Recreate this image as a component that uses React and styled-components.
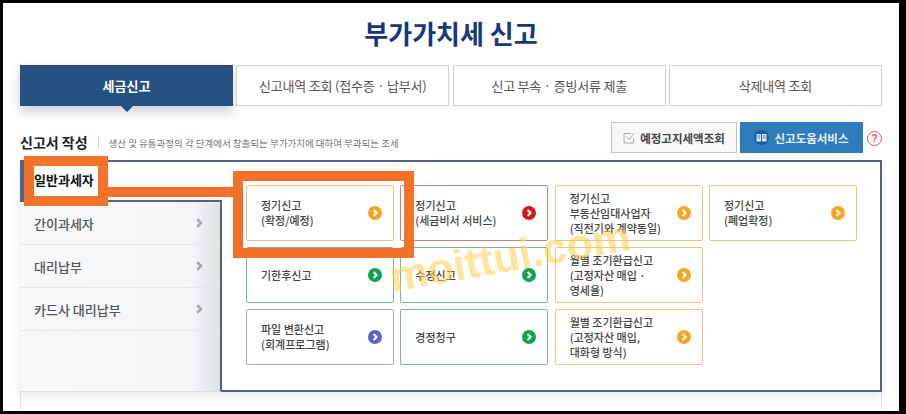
import React from 'react';
import styled, { createGlobalStyle } from 'styled-components';

const GlobalStyle = createGlobalStyle`
  html, body {
    margin: 0;
    background: #000;
  }
  * {
    box-sizing: border-box;
  }
`;

const line = '#56627e';
const orange = '#f3722a';

const Frame = styled.div`
  width: 896px;
  height: 408px;
  margin: 3px 0 0 3px;
  padding: 0 17px;
  background: #fff;
  overflow: hidden;
  font-family: "Noto Sans CJK KR", "Noto Sans", sans-serif;
  color: #333;
`;

const Title = styled.h1`
  height: 62px;
  margin: 0;
  padding-top: 10px;
  font-size: 26px;
  line-height: 40px;
  font-weight: 700;
  text-align: center;
  color: #17387a;
`;

const Tabs = styled.div`
  display: grid;
  grid-template-columns: repeat(4, 213px);
  column-gap: 3.33px;
  height: 41px;
`;

const Tab = styled.div`
  position: relative;
  display: flex;
  align-items: center;
  justify-content: center;
  font-size: 13px;
  font-weight: ${props => (props.$active ? 700 : 400)};
  letter-spacing: ${props => (props.$active ? 0 : '-0.2px')};
  color: ${props => (props.$active ? '#fff' : '#555')};
  background: ${props => (props.$active ? '#26507f' : '#fff')};
  border: 1px solid ${props => (props.$active ? '#26507f' : '#cfcfcf')};
  box-shadow: ${props => (props.$active ? '0 6px 10px rgba(40, 50, 70, .22)' : 'none')};

  ${props => props.$active && `
    &::after {
      content: '';
      position: absolute;
      left: 50%;
      bottom: -7px;
      margin-left: -6px;
      border-left: 6px solid transparent;
      border-right: 6px solid transparent;
      border-top: 6px solid #26507f;
    }
  `}
`;

const SectionRow = styled.div`
  display: flex;
  align-items: flex-end;
  height: 54px;
  padding: 16px 0 7px;
`;

const SectionTitle = styled.strong`
  font-size: 14px;
  line-height: 22px;
  font-weight: 700;
  color: #222;
`;

const SectionNote = styled.span`
  flex: 1;
  margin-left: 10px;
  padding-left: 11px;
  font-size: 9.5px;
  line-height: 20px;
  color: #777;
  position: relative;

  &::before {
    content: '';
    position: absolute;
    left: 0;
    top: 5px;
    height: 11px;
    border-left: 1px solid #ccc;
  }
`;

const ToolButton = styled.div`
  display: flex;
  align-items: center;
  justify-content: center;
  gap: 5px;
  height: 31px;
  width: ${props => props.$width}px;
  margin-right: 3px;
  font-size: 11.5px;
  font-weight: 700;
  color: ${props => (props.$primary ? '#e8f0f8' : '#444')};
  background: ${props => (props.$primary ? '#2f7cbd' : '#f8f8f8')};
  border: 1px solid ${props => (props.$primary ? '#2f7cbd' : '#c4c4c4')};
`;

const BookBadge = styled.span`
  display: flex;
  align-items: center;
  justify-content: center;
  width: 15px;
  height: 15px;
  border-radius: 50%;
  background: #1d5c98;
`;

const HelpMark = styled.span`
  display: flex;
  align-items: center;
  justify-content: center;
  width: 15px;
  height: 15px;
  margin: 0 0 7px 1px;
  border: 1.5px solid #d9534f;
  border-radius: 50%;
  font-family: "Liberation Sans", sans-serif;
  font-size: 10px;
  font-weight: 700;
  color: #d9534f;
`;

const Panel = styled.div`
  position: relative;
  display: flex;
  height: 232px;
  box-shadow: 0 5px 8px rgba(60, 70, 90, .12);
`;

const Sidebar = styled.div`
  display: flex;
  flex-direction: column;
  width: 202px;
`;

const ActiveItem = styled.div`
  height: 42px;
  padding: 6px 0 0 10px;
  border-top: 2px solid ${line};
  border-left: 4px solid ${line};
  border-bottom: 2px solid ${line};
  background: #fff;
  font-size: 13px;
  line-height: 24px;
  font-weight: 700;
  color: #111;
  position: relative;
  z-index: 3;
`;

const SideList = styled.div`
  flex: 1;
  border-right: 2px solid ${line};
  border-bottom: 1px solid #dcdde0;
  background: linear-gradient(to right, #f7f8fa 0, #f5f6f8 85%, #dfe1e6 100%);
`;

const SideItem = styled.div`
  display: flex;
  align-items: center;
  justify-content: space-between;
  height: 43px;
  padding: 0 16px 0 14px;
  border-bottom: 1px solid #e6e7ea;
  font-size: 13px;
  font-weight: 500;
  color: #555;
`;

const Content = styled.div`
  flex: 1;
  padding: 23px 0 0 24px;
  border-top: 2px solid ${line};
  border-right: 2px solid ${line};
  border-bottom: 2px solid ${line};
  background: #fff;
`;

const Cards = styled.div`
  display: grid;
  grid-template-columns: repeat(4, 148px);
  grid-auto-rows: 56px;
  gap: 6px 6.33px;
`;

const tones = {
  yellow: { border: '#dfc883', dot: '#f5a623' },
  red: { border: '#cf7c84', dot: '#d7161f' },
  green: { border: '#73b9a0', dot: '#13a24f' },
  purple: { border: '#a6a9c4', dot: '#5f64c8' }
};

const Card = styled.div`
  display: flex;
  align-items: center;
  justify-content: space-between;
  padding: 0 11px 0 14px;
  border: 1px solid ${props => tones[props.$tone].border};
  border-radius: 2px;
  background: #fff;
  font-size: 11px;
  line-height: 15px;
  font-weight: 500;
  color: #444;
`;

const Dot = styled.span`
  flex: none;
  display: flex;
  align-items: center;
  justify-content: center;
  width: 14px;
  height: 14px;
  border-radius: 50%;
  background: ${props => tones[props.$tone].dot};
`;

const Below = styled.div`
  height: 30px;
  border-left: 1px solid #e4e4e4;
  border-right: 1px solid #e4e4e4;
`;

const Highlight = styled.div`
  position: absolute;
  left: ${props => props.$x}px;
  top: ${props => props.$y}px;
  width: ${props => props.$w}px;
  height: ${props => props.$h}px;
  border: 10px solid ${orange};
  z-index: 4;
`;

const Connector = styled.div`
  position: absolute;
  left: 88px;
  top: 27px;
  width: 125px;
  height: 10px;
  background: ${orange};
  z-index: 4;
`;

const Watermark = styled.div`
  position: absolute;
  left: 368px;
  top: 71px;
  font-family: "Liberation Sans", sans-serif;
  font-size: 43px;
  line-height: 50px;
  font-weight: 700;
  color: rgba(255, 205, 70, .55);
  transform: rotate(-10deg);
  z-index: 5;
  white-space: nowrap;
`;

const Chevron = ({ size = 8, color = '#fff', width = 2 }) => (
  <svg width={size} height={size} viewBox="0 0 8 8" fill="none">
    <path d="M2.6 1 L5.6 4 L2.6 7" stroke={color} strokeWidth={width} />
  </svg>
);

const CheckBox = () => (
  <svg width="12" height="12" viewBox="0 0 12 12" fill="none" stroke="#aaa" strokeWidth="1">
    <path d="M10.5 6.5 V11 H1 V1.5 H8" />
    <path d="M3.5 4.5 L6 7.5 L11 1" />
  </svg>
);

const Book = () => (
  <svg width="11" height="9" viewBox="0 0 11 9">
    <path d="M0.5 1 H5 V8.5 H0.5 Z M6 1 H10.5 V8.5 H6 Z" fill="#dbe8f5" />
    <path d="M1.5 3 H4 M1.5 5 H4 M7 3 H9.5 M7 5 H9.5" stroke="#1d5c98" strokeWidth="0.8" />
  </svg>
);

const sideItems = ['간이과세자', '대리납부', '카드사 대리납부'];

const cards = [
  { tone: 'yellow', lines: ['정기신고', '(확정/예정)'] },
  { tone: 'red', lines: ['정기신고', '(세금비서 서비스)'] },
  { tone: 'yellow', lines: ['정기신고', '부동산임대사업자', '(직전기와 계약동일)'] },
  { tone: 'yellow', lines: ['정기신고', '(폐업확정)'] },
  { tone: 'green', lines: ['기한후신고'] },
  { tone: 'green', lines: ['수정신고'] },
  { tone: 'yellow', lines: ['월별 조기환급신고', '(고정자산 매입 ·', '영세율)'] },
  { tone: 'empty' },
  { tone: 'purple', lines: ['파일 변환신고', '(회계프로그램)'] },
  { tone: 'green', lines: ['경정청구'] },
  { tone: 'yellow', lines: ['월별 조기환급신고', '(고정자산 매입,', '대화형 방식)'] }
];

const App = () => (
  <Frame>
    <GlobalStyle />
    <Title>부가가치세 신고</Title>
    <Tabs>
      <Tab $active>세금신고</Tab>
      <Tab>신고내역 조회 (접수증 · 납부서)</Tab>
      <Tab>신고 부속 · 증빙서류 제출</Tab>
      <Tab>삭제내역 조회</Tab>
    </Tabs>
    <SectionRow>
      <SectionTitle>신고서 작성</SectionTitle>
      <SectionNote>생산 및 유통과정의 각 단계에서 창출되는 부가가치에 대하여 부과되는 조세</SectionNote>
      <ToolButton $width={126}><CheckBox />예정고지세액조회</ToolButton>
      <ToolButton $width={123} $primary><BookBadge><Book /></BookBadge>신고도움서비스</ToolButton>
      <HelpMark>?</HelpMark>
    </SectionRow>
    <Panel>
      <Sidebar>
        <ActiveItem>일반과세자</ActiveItem>
        <SideList>
          {sideItems.map(item => (
            <SideItem key={item}>
              {item}
              <Chevron size={10} color="#aaa" />
            </SideItem>
          ))}
        </SideList>
      </Sidebar>
      <Content>
        <Cards>
          {cards.map((card, i) => (
            card.tone === 'empty' ? <div key={i} /> : (
              <Card key={i} $tone={card.tone}>
                <div>
                  {card.lines.map(text => <div key={text}>{text}</div>)}
                </div>
                <Dot $tone={card.tone}><Chevron /></Dot>
              </Card>
            )
          ))}
        </Cards>
      </Content>
      <Highlight $x={4} $y={-4} $w={84} $h={50} />
      <Connector />
      <Highlight $x={213} $y={11} $w={181} $h={87} />
      <Watermark>moittui.com</Watermark>
    </Panel>
    <Below />
  </Frame>
);

export default App;
